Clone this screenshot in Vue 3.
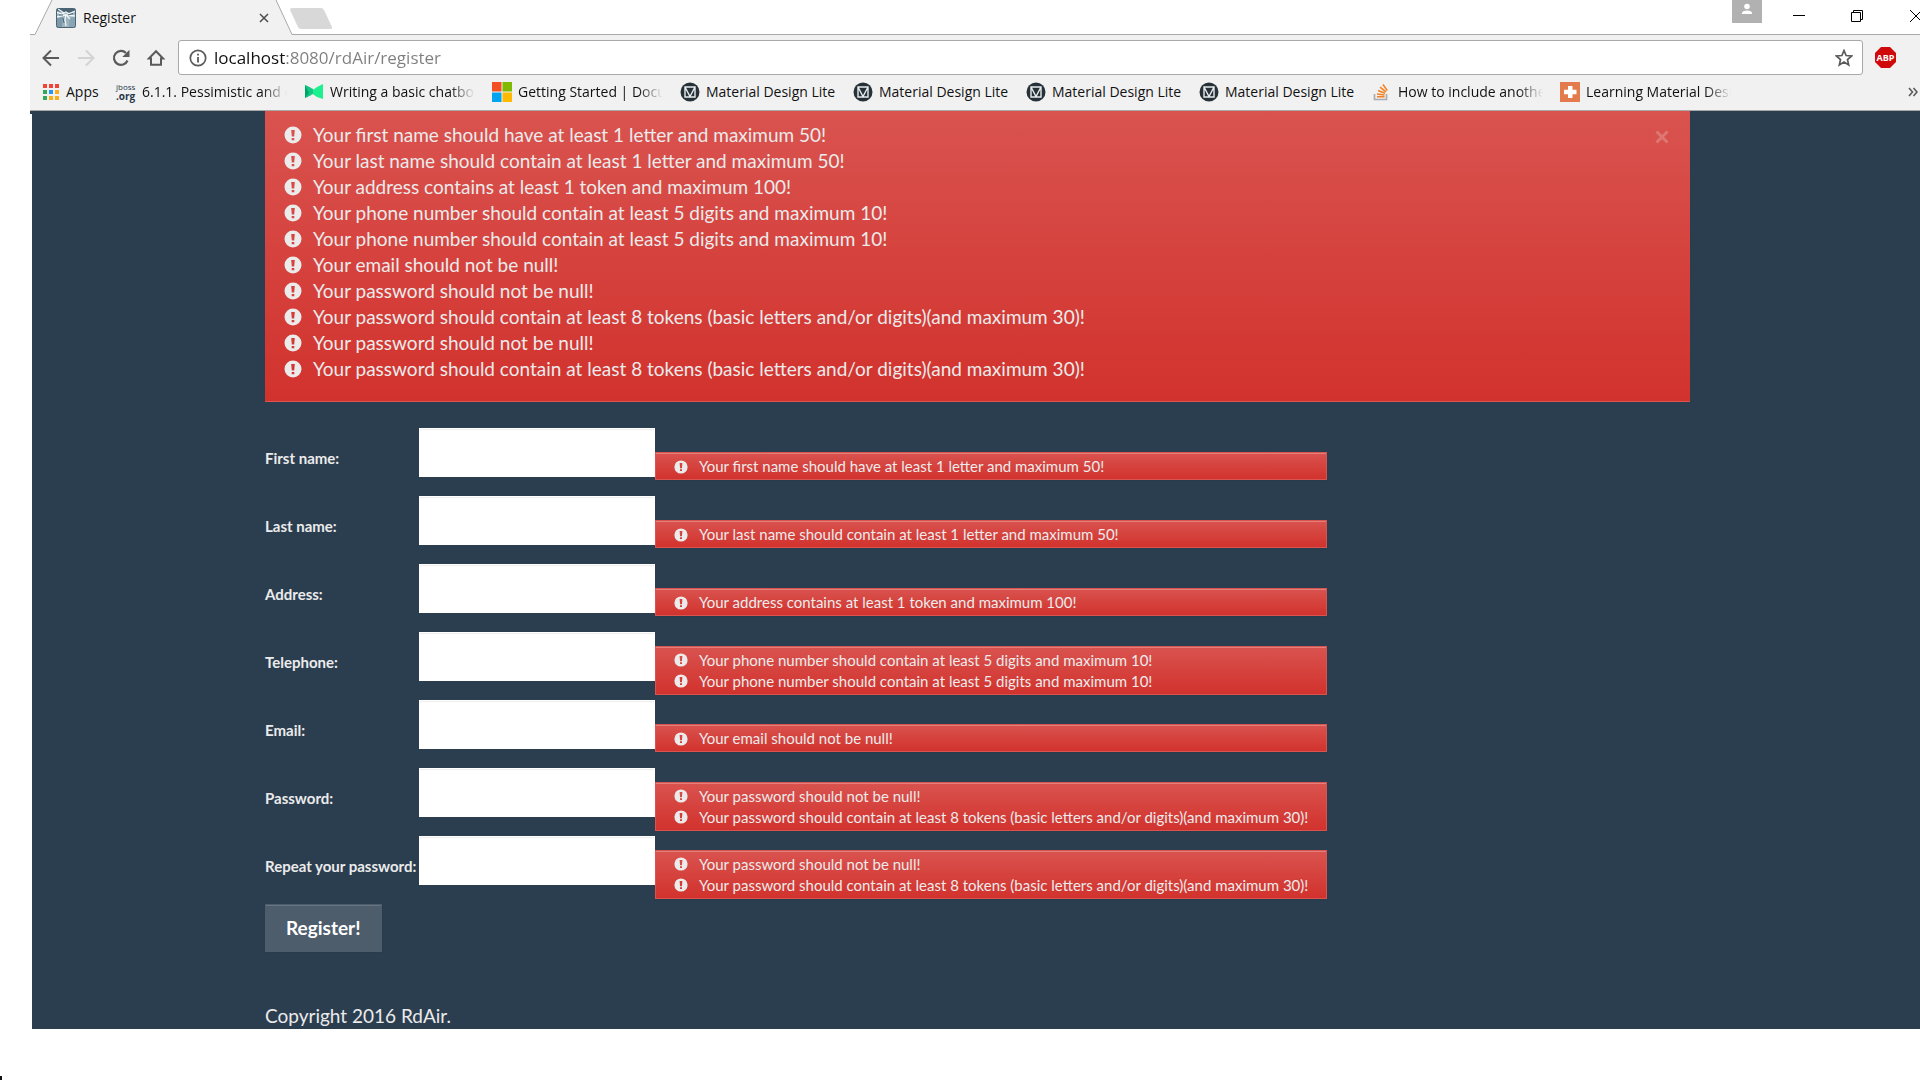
<script setup>
import { ref } from 'vue'

const url = ref('localhost:8080/rdAir/register')

const bookmarks = [
  { icon: 'apps', text: 'Apps', size: 'fit' },
  { icon: 'jboss', text: '6.1.1. Pessimistic and o', size: 'cut' },
  { icon: 'medium', text: 'Writing a basic chatbo', size: 'cut' },
  { icon: 'windows', text: 'Getting Started | Docu', size: 'cut' },
  { icon: 'mdl', text: 'Material Design Lite', size: 'full' },
  { icon: 'mdl', text: 'Material Design Lite', size: 'full' },
  { icon: 'mdl', text: 'Material Design Lite', size: 'full' },
  { icon: 'mdl', text: 'Material Design Lite', size: 'full' },
  { icon: 'stack', text: 'How to include anothe', size: 'cut' },
  { icon: 'plus', text: 'Learning Material Desi', size: 'cut' },
]

const firstName = 'Your first name should have at least 1 letter and maximum 50!'
const lastName = 'Your last name should contain at least 1 letter and maximum 50!'
const address = 'Your address contains at least 1 token and maximum 100!'
const phone = 'Your phone number should contain at least 5 digits and maximum 10!'
const email = 'Your email should not be null!'
const passNull = 'Your password should not be null!'
const passSize = 'Your password should contain at least 8 tokens (basic letters and/or digits)(and maximum 30)!'

const fields = [
  { id: 'firstName', label: 'First name:', type: 'text', errors: [firstName] },
  { id: 'lastName', label: 'Last name:', type: 'text', errors: [lastName] },
  { id: 'address', label: 'Address:', type: 'text', errors: [address] },
  { id: 'telephone', label: 'Telephone:', type: 'text', errors: [phone, phone] },
  { id: 'email', label: 'Email:', type: 'text', errors: [email] },
  { id: 'password', label: 'Password:', type: 'password', errors: [passNull, passSize] },
  { id: 'repeat', label: 'Repeat your password:', type: 'password', errors: [passNull, passSize] },
]
const allErrors = fields.flatMap((f) => f.errors)
</script>

<template>
  <div class="screen">
    <div class="browser">
      <div class="strip">
        <div class="tab">
          <svg class="tab-shape" width="262" height="35" viewBox="0 0 262 35">
            <path d="M0 35V34.500H5L22 0H246L262 34.500V35Z" fill="#f1f1f1" />
            <path d="M0 34.500H5L22 0M246 0L262 34.500" fill="none" stroke="#a9a9a9" />
          </svg>
          <svg class="favicon" width="20" height="20" viewBox="0 0 20 20">
            <rect width="20" height="20" rx="2" fill="#9db4c1" />
            <path d="M1 1H19V3L11 5L1 3Z" fill="#4b6472" />
            <path d="M1 10L7 9L6 19H1Z" fill="#7d98a8" /><path d="M13 10L19 9V19H13Z" fill="#8aa4b3" />
            <path d="M0 4L6 6L10 4L13 6L19 3M1 9L9 7L19 8M10 6L9 12L10 18M11 8L14 11M2 1L8 5" fill="none" stroke="#f0f5f7" stroke-width="1.300" />
            <path d="M3 7L7 7M12 7L17 5.500M7 10L8 15" fill="none" stroke="#4b6472" />
            <rect x=".5" y=".5" width="19" height="19" rx="2" fill="none" stroke="#4d6371" />
          </svg>
          <span class="tab-title">Register</span>
          <button class="plain" aria-label="Close tab">
            <svg width="10" height="10" viewBox="0 0 10 10"><path d="M1 1L9 9M9 1L1 9" stroke="#4b4b4b" stroke-width="1.500" /></svg>
          </button>
        </div>
        <button class="plain new-tab" aria-label="New tab">
          <svg width="44" height="22" viewBox="0 0 44 22"><path d="M0 0H29Q31 0 32 2L40 19Q40.500 21 38 21H9Q7 21 6 19L-2 2Q-2 0 0 0Z" fill="#d8d8d8" /></svg>
        </button>
        <div class="window-controls">
          <button class="plain avatar" aria-label="Profile">
            <svg width="30" height="23" viewBox="0 0 30 23"><rect width="30" height="23" fill="#b1b1b1" /><circle cx="15" cy="6.500" r="2.800" fill="#fff" /><path d="M10 14V12.500Q11 10.500 15 10.500T20 12.500V14Z" fill="#fff" /></svg>
          </button>
          <button class="plain minimise" aria-label="Minimise">
            <svg width="12" height="12" viewBox="0 0 12 12"><path d="M0 5.500H12" stroke="#000" /></svg>
          </button>
          <button class="plain restore" aria-label="Restore">
            <svg width="12" height="12" viewBox="0 0 12 12"><path d="M.5 2.500H9.500V11.500H.5ZM2.500 2V.5H11.500V9.500H10" fill="none" stroke="#000" /></svg>
          </button>
          <button class="plain" aria-label="Close">
            <svg width="10" height="12" viewBox="0 0 10 12"><path d="M0 0L12 12M0 12L12 0" stroke="#000" /></svg>
          </button>
        </div>
      </div>

      <div class="toolbar">
        <div class="nav">
          <button class="plain" aria-label="Back">
            <svg width="18" height="18" viewBox="0 0 18 18"><path d="M17 9H2M9 1.500L1.500 9L9 16.500" fill="none" stroke="#5a5a5a" stroke-width="2" /></svg>
          </button>
          <button class="plain" aria-label="Forward">
            <svg width="18" height="18" viewBox="0 0 18 18"><path d="M1 9H16M9 1.500L16.500 9L9 16.500" fill="none" stroke="#d3d3d3" stroke-width="2" /></svg>
          </button>
          <button class="plain" aria-label="Reload">
            <svg width="18" height="18" viewBox="0 0 18 18"><path d="M15.500 11.500A7 7 0 1 1 14 4" fill="none" stroke="#5a5a5a" stroke-width="2.200" /><path d="M17.500 .8V8H10.300Z" fill="#5a5a5a" /></svg>
          </button>
          <button class="plain" aria-label="Home">
            <svg width="18" height="18" viewBox="0 0 18 18"><path d="M9 2.200L1.800 9.500H4V15.800H14V9.500H16.200Z" fill="none" stroke="#5a5a5a" stroke-width="2" /></svg>
          </button>
        </div>
        <div class="omnibox">
          <svg width="18" height="18" viewBox="0 0 18 18"><circle cx="9" cy="9" r="7.700" fill="none" stroke="#5a5a5a" stroke-width="1.700" /><path d="M9 8V13.500M9 4.700V6.500" stroke="#5a5a5a" stroke-width="1.800" /></svg>
          <input v-model="url" class="url" type="text" aria-label="Address" />
          <button class="plain" aria-label="Bookmark this page">
            <svg width="18" height="18" viewBox="0 0 18 18"><path d="M9 1.500L11.100 6.500L16.600 7L12.500 10.600L13.700 16L9 13.100L4.300 16L5.500 10.600L1.400 7L6.900 6.500Z" fill="none" stroke="#5a5a5a" stroke-width="1.700" /></svg>
          </button>
        </div>
        <button class="plain abp" aria-label="Adblock Plus">
          <svg width="21" height="21" viewBox="0 0 21 21"><path d="M6 0H15L21 6V15L15 21H6L0 15V6Z" fill="#d00a0a" /></svg>
          <span>ABP</span>
        </button>
      </div>

      <nav class="bookmarks">
        <a v-for="(b, i) in bookmarks" :key="i" href="#" class="bookmark">
          <svg v-if="b.icon === 'apps'" width="18" height="20" viewBox="0 0 18 20">
            <path d="M1 2h4v4h-4zM7 2h4v4h-4zM13 2h4v4h-4z" fill="#f44336" />
            <path d="M1 8h4v4h-4zM1 14h4v4h-4z" fill="#34a853" />
            <path d="M7 8h4v4h-4z" fill="#2196f3" />
            <path d="M13 8h4v4h-4zM7 14h4v4h-4zM13 14h4v4h-4z" fill="#fbae17" />
          </svg>
          <span v-else-if="b.icon === 'jboss'" class="jboss"><span>jboss</span><b>.org</b></span>
          <svg v-else-if="b.icon === 'medium'" width="20" height="20" viewBox="0 0 20 20">
            <path d="M1 3L7 6V13L1 16Z" fill="#00a468" /><path d="M1 3L9 7L14 15L9 12L1 16L5 11Z" fill="#12c981" /><path d="M9 8L13 5L19 2V17L13 15L9 12Z" fill="#1cf08f" />
          </svg>
          <svg v-else-if="b.icon === 'windows'" width="20" height="20" viewBox="0 0 20 20">
            <path d="M0 0h9.500v9.500h-9.500z" fill="#f25022" /><path d="M10.500 0h9.500v9.500h-9.500z" fill="#7fba00" /><path d="M0 10.500h9.500v9.500h-9.500z" fill="#00a4ef" /><path d="M10.500 10.500h9.500v9.500h-9.500z" fill="#ffb900" />
          </svg>
          <svg v-else-if="b.icon === 'mdl'" width="20" height="20" viewBox="0 0 20 20">
            <circle cx="10" cy="10" r="9.500" fill="#263238" /><path d="M5 5H15V15H5ZM5 5L10 14.500L15 5" fill="none" stroke="#e8ecee" stroke-width="1.400" />
          </svg>
          <svg v-else-if="b.icon === 'stack'" width="20" height="20" viewBox="0 0 20 20">
            <path d="M2.500 12V17.500H14.500V12" fill="none" stroke="#a9adb2" stroke-width="1.700" />
            <path d="M5 14.800H12.500M5 12L12.500 13M6 8.600L13 11.300M8 5.200L14 9.800M11 2.500L15.300 8.600" stroke="#f48024" stroke-width="1.600" />
          </svg>
          <svg v-else width="20" height="20" viewBox="0 0 20 20">
            <rect width="20" height="20" fill="#e37b4c" /><path d="M8 4h4.500v3.800h4v4.500h-4v3.700h-4.500v-3.700h-4v-4.500h4z" fill="#fff" />
          </svg>
          <span class="bm-text" :class="b.size">{{ b.text }}</span>
        </a>
        <button class="plain more" aria-label="More bookmarks">
          <svg width="10" height="10" viewBox="0 0 10 10"><path d="M1 1L4.500 5L1 9M5.500 1L9 5L5.500 9" fill="none" stroke="#5a5a5a" stroke-width="1.600" /></svg>
        </button>
      </nav>
    </div>

    <main class="page">
      <section class="banner">
        <ul>
          <li v-for="(e, i) in allErrors" :key="i">
            <svg class="bang" viewBox="0 0 18 18"><path fill-rule="evenodd" d="M9 .5A8.500 8.500 0 1 1 9 17.500A8.500 8.500 0 1 1 9 .5ZM7.200 4L7.800 10.500H10.200L10.800 4ZM7.700 12V14.200H10.300V12Z" fill="#ebebeb" /></svg>
            {{ e }}
          </li>
        </ul>
        <button class="plain dismiss" aria-label="Dismiss">
          <svg width="14" height="14" viewBox="0 0 14 14"><path d="M1.500 1.500L12.500 12.500M12.500 1.500L1.500 12.500" stroke="#ebebeb" stroke-opacity=".25" stroke-width="3" /></svg>
        </button>
      </section>

      <form class="form" @submit.prevent>
        <template v-for="f in fields" :key="f.id">
          <label :for="f.id">{{ f.label }}</label>
          <input :id="f.id" class="field" :type="f.type" />
          <ul class="errors">
            <li v-for="(e, i) in f.errors" :key="i">
              <svg class="bang" viewBox="0 0 18 18"><path fill-rule="evenodd" d="M9 .5A8.500 8.500 0 1 1 9 17.500A8.500 8.500 0 1 1 9 .5ZM7.200 4L7.800 10.500H10.200L10.800 4ZM7.700 12V14.200H10.300V12Z" fill="#ebebeb" /></svg>
              {{ e }}
            </li>
          </ul>
        </template>
        <button class="submit" type="submit">Register!</button>
      </form>

      <footer>Copyright 2016 RdAir.</footer>
    </main>
    <div class="caret"></div>
  </div>
</template>

<style>
body { margin: 0; background: #fff; }
</style>

<style scoped>
.screen {
  display: flex;
  flex-direction: column;
  min-height: 100vh;
  overflow: hidden;
  font-family: Lato, sans-serif;
}
.screen * { box-sizing: border-box; }
svg { display: block; flex: none; }
ul { margin: 0; padding: 0; list-style: none; }
.plain {
  display: block;
  padding: 0;
  border: 0;
  background: none;
}

/* browser frame */
.browser {
  margin-left: 30px;
  border-bottom: 1px solid #a9a9a9;
  background: #f1f1f1;
  font-family: "Open Sans", sans-serif;
  color: #111;
}
.strip {
  display: flex;
  height: 35px;
  background: #fff;
  border-bottom: 1px solid #a9a9a9;
}
.tab {
  position: relative;
  display: flex;
  align-items: center;
  width: 262px;
  height: 35px;
  padding: 0 23px 0 26px;
}
.tab > * { position: relative; }
.tab .tab-shape { position: absolute; top: 0; left: 0; }
.tab-title { flex: 1; margin-left: 7px; font-size: 14px; }
.new-tab { align-self: flex-start; margin-top: 8px; }
.new-tab svg { overflow: visible; }
.window-controls { display: flex; margin-left: auto; align-items: flex-start; }
.window-controls .plain { margin-top: 10px; }
.window-controls .avatar { margin-top: 0; margin-right: 31px; }
.minimise { margin-right: 46px; }
.restore { margin-right: 47px; }

.toolbar { display: flex; align-items: center; height: 45px; padding: 0 24px 0 12px; }
.nav { display: flex; gap: 17px; margin-right: 13px; }
.omnibox {
  display: flex;
  flex: 1;
  align-items: center;
  height: 35px;
  padding: 0 9px 0 10px;
  border: 1px solid #a9a9a9;
  border-radius: 3px;
  background: #fff;
}
.url {
  flex: 1;
  min-width: 0;
  margin-left: 7px;
  padding: 0;
  border: 0;
  outline: 0;
  font: 17px/24px "Open Sans", sans-serif;
  background: linear-gradient(90deg, #111 72px, #7e7e7e 72px);
  background-clip: text;
  -webkit-background-clip: text;
  color: transparent;
}
.abp { position: relative; margin-left: 12px; }
.abp span {
  position: absolute;
  inset: 0;
  font: bold 9px/21px "Open Sans", sans-serif;
  color: #fff;
}

.bookmarks { display: flex; align-items: center; gap: 17px; height: 30px; padding: 0 2px 6px 12px; }
.bookmark {
  display: flex;
  align-items: center;
  gap: 6px;
  color: #111;
  text-decoration: none;
}
.bm-text { white-space: nowrap; font-size: 14px; line-height: 20px; }
.cut { width: 145px; mask-image: linear-gradient(90deg, #000 120px, transparent 145px); }
.full { width: 130px; }
.fit { width: 33px; }
.jboss { width: 20px; font-size: 8px; line-height: 8px; color: #26364a; }
.jboss span, .jboss b { display: block; }
.jboss b { font-size: 10px; line-height: 10px; }
.more { margin-left: auto; }

/* registration page */
.page {
  position: relative;
  margin-left: 32px;
  padding: 0 230px 0 233px;
  background: #2b3e50;
  color: #ebebeb;
}
.page::before {
  content: "";
  position: absolute;
  top: 0;
  left: -2px;
  width: 2px;
  height: 3px;
  background: #2b3e50;
}
.banner {
  display: flex;
  justify-content: space-between;
  align-items: flex-start;
  padding: 11px 21px 19px 19px;
  border-bottom: 1px solid #d9534f;
  background: linear-gradient(#d9534f, #d2322d);
  font-size: 19px;
  line-height: 26px;
}
.banner li, .errors li { display: flex; align-items: center; gap: 11px; white-space: nowrap; }
.banner .bang { width: 18px; height: 18px; }
.errors .bang { width: 14px; height: 14px; }
.dismiss { margin-top: 8px; }

.form {
  display: grid;
  grid-template-columns: minmax(154px, max-content) 236px 672px;
  grid-auto-rows: 68px;
  margin-top: 26px;
}
.form label { padding-top: 20px; font-size: 15px; line-height: 21px; font-weight: bold; }
.field {
  width: 236px;
  height: 49px;
  border: 1px solid #fff;
  padding: 10px 18px;
  background: #fff;
  box-shadow: inset 0 1px 1px rgba(0, 0, 0, .075);
  font: 19px/26px Lato, sans-serif;
}
.errors {
  align-self: center;
  margin-top: 8px;
  padding: 3px 18px 2px 18px;
  border: 1px solid #d9534f;
  background: linear-gradient(#d9534f, #d2322d);
  box-shadow: inset 0 1px 0 rgba(255, 255, 255, .25), 0 1px 2px rgba(0, 0, 0, .05);
  font-size: 15px;
  line-height: 21px;
}
.submit {
  justify-self: start;
  grid-column: 1 / -1;
  height: 48px;
  padding: 0 20px;
  border: 1px solid #4e5d6c;
  background: #4e5d6c;
  box-shadow: inset 0 1px 0 rgba(255, 255, 255, .15), 0 1px 2px rgba(0, 0, 0, .05);
  color: #fff;
  font: bold 19px/26px Lato, sans-serif;
}
footer { padding-top: 31px; font-size: 19px; line-height: 26px; }
.caret { width: 2px; height: 4px; margin-top: auto; background: #111; }
</style>
